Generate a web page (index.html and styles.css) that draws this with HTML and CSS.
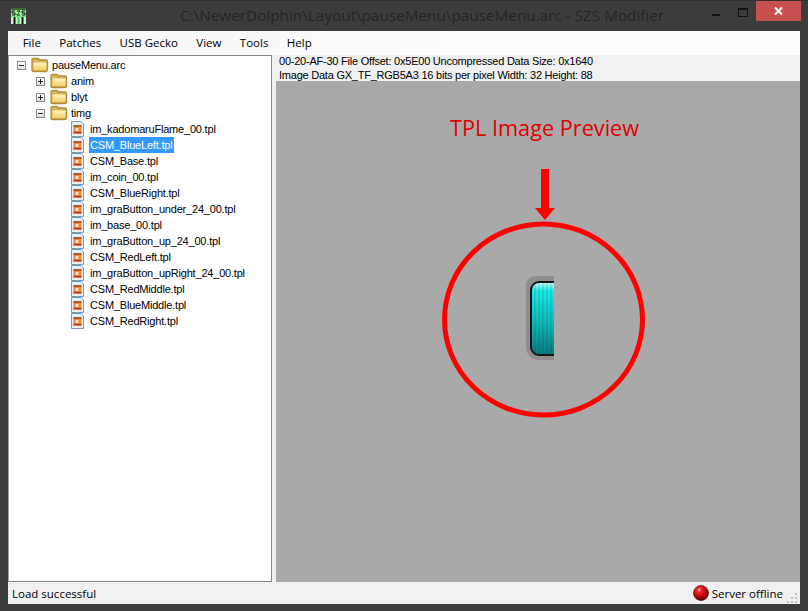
FILE: index.html
```html
<!DOCTYPE html>
<html lang="en">
<head>
<meta charset="utf-8">
<title>SZS Modifier</title>
<link rel="stylesheet" href="styles.css">
</head>
<body>
<div class="window">
  <header class="titlebar">
    <svg class="app-icon" width="15" height="16" viewBox="0 0 15 16">
      <rect width="15" height="16" fill="#6fe86f"/>
      <rect x="0" y="0" width="15" height="2" fill="#3a6a3a"/>
      <rect x="0" y="2" width="15" height="6" fill="#8ff08f"/>
      <path d="M1 3h3M1 5h3M1 7h3M1 3v2M4 5v2M6 3h3M8.500 3v1M7 5h1M6 7h3M6 6v1M11 3h3M11 5h3M11 7h3M11 3v2M14 5v2" stroke="#101810" stroke-width="1" fill="none"/>
      <rect x="0" y="9" width="15" height="7" fill="#c8f8c8"/>
      <path d="M3.500 9v7M11.500 9v7" stroke="#111" stroke-width="2" fill="none"/>
      <path d="M7.500 9v7" stroke="#4ac04a" stroke-width="2" fill="none"/>
    </svg>
    <div class="title">C:\NewerDolphin\Layout\pauseMenu\pauseMenu.arc - SZS Modifier</div>
    <div class="controls">
      <span class="min"></span>
      <span class="max"></span>
      <span class="close">
        <svg width="9" height="8" viewBox="0 0 9 8"><path d="M1 0.500L8 7.500M8 0.500L1 7.500" stroke="#fff" stroke-width="2" fill="none"/></svg>
      </span>
    </div>
  </header>
  <div class="client">
    <nav class="menubar">
      <span>File</span><span>Patches</span><span>USB Gecko</span><span>View</span><span>Tools</span><span>Help</span>
    </nav>
    <main class="split">
      <aside class="tree">
        <div class="row lvl0"><i class="exp minus"></i><svg class="folder"><use href="#folder"/></svg><span class="label">pauseMenu.arc</span></div>
        <div class="row lvl1"><i class="exp plus"></i><svg class="folder"><use href="#folder"/></svg><span class="label">anim</span></div>
        <div class="row lvl1"><i class="exp plus"></i><svg class="folder"><use href="#folder"/></svg><span class="label">blyt</span></div>
        <div class="row lvl1"><i class="exp minus"></i><svg class="folder"><use href="#folder"/></svg><span class="label">timg</span></div>
        <div class="row lvl2"><svg class="file"><use href="#file"/></svg><span class="label">im_kadomaruFlame_00.tpl</span></div>
        <div class="row lvl2"><svg class="file"><use href="#file"/></svg><span class="label selected">CSM_BlueLeft.tpl</span></div>
        <div class="row lvl2"><svg class="file"><use href="#file"/></svg><span class="label">CSM_Base.tpl</span></div>
        <div class="row lvl2"><svg class="file"><use href="#file"/></svg><span class="label">im_coin_00.tpl</span></div>
        <div class="row lvl2"><svg class="file"><use href="#file"/></svg><span class="label">CSM_BlueRight.tpl</span></div>
        <div class="row lvl2"><svg class="file"><use href="#file"/></svg><span class="label">im_graButton_under_24_00.tpl</span></div>
        <div class="row lvl2"><svg class="file"><use href="#file"/></svg><span class="label">im_base_00.tpl</span></div>
        <div class="row lvl2"><svg class="file"><use href="#file"/></svg><span class="label">im_graButton_up_24_00.tpl</span></div>
        <div class="row lvl2"><svg class="file"><use href="#file"/></svg><span class="label">CSM_RedLeft.tpl</span></div>
        <div class="row lvl2"><svg class="file"><use href="#file"/></svg><span class="label">im_graButton_upRight_24_00.tpl</span></div>
        <div class="row lvl2"><svg class="file"><use href="#file"/></svg><span class="label">CSM_RedMiddle.tpl</span></div>
        <div class="row lvl2"><svg class="file"><use href="#file"/></svg><span class="label">CSM_BlueMiddle.tpl</span></div>
        <div class="row lvl2"><svg class="file"><use href="#file"/></svg><span class="label">CSM_RedRight.tpl</span></div>
      </aside>
      <section class="detail">
        <div class="info">
          <div>00-20-AF-30 File Offset: 0x5E00 Uncompressed Data Size: 0x1640</div>
          <div>Image Data GX_TF_RGB5A3 16 bits per pixel Width: 32 Height: 88</div>
        </div>
        <div class="preview">
          <div class="callout">TPL Image Preview</div>
          <svg class="annot" width="524" height="501" viewBox="0 0 524 501">
            <defs>
              <linearGradient id="cyan" x1="0" y1="0" x2="0" y2="1">
                <stop offset="0" stop-color="#d0ffff"/>
                <stop offset="0.12" stop-color="#19e8e8"/>
                <stop offset="0.6" stop-color="#0eb4b6"/>
                <stop offset="1" stop-color="#0a7a80"/>
              </linearGradient>
              <pattern id="stripes" width="4" height="4" patternUnits="userSpaceOnUse">
                <rect x="2" width="2" height="4" fill="#000" opacity="0.09"/>
              </pattern>
            </defs>
            <path d="M278 195H259a9 9 0 0 0 -9 9V266a13 13 0 0 0 13 13H278z" fill="#8e8e8e"/>
            <path d="M278 201H263a8 8 0 0 0 -8 8V266a8 8 0 0 0 8 8H278z" fill="url(#cyan)"/>
            <path d="M278 201H263a8 8 0 0 0 -8 8V266a8 8 0 0 0 8 8H278z" fill="url(#stripes)"/>
            <path d="M278 201H263a8 8 0 0 0 -8 8V266a8 8 0 0 0 8 8H278" fill="none" stroke="#161616" stroke-width="2"/>
            <rect x="265" y="88" width="8" height="40" fill="#f00"/>
            <path d="M259 127H279L269 139z" fill="#f00"/>
            <ellipse cx="267.500" cy="238.500" rx="99" ry="95.500" fill="none" stroke="#f00" stroke-width="5"/>
          </svg>
        </div>
      </section>
    </main>
    <footer class="statusbar">
      <span class="status-text">Load successful</span>
      <span class="server">
        <svg width="16" height="16" viewBox="0 0 16 16">
          <defs><radialGradient id="led" cx="0.38" cy="0.3" r="0.75"><stop offset="0" stop-color="#ffd0d0"/><stop offset="0.16" stop-color="#f03030"/><stop offset="0.55" stop-color="#c00808"/><stop offset="1" stop-color="#5a0000"/></radialGradient></defs>
          <circle cx="8" cy="8" r="7.500" fill="url(#led)" stroke="#4a0a0a" stroke-width="0.700"/>
        </svg>
        Server offline
      </span>
      <svg class="grip" width="11" height="11" viewBox="0 0 11 11">
        <path d="M8 1h2v2H8zM4 5h2v2H4zM8 5h2v2H8zM0 9h2v2H0zM4 9h2v2H4zM8 9h2v2H8z" fill="#c4c4c4"/>
      </svg>
    </footer>
  </div>
</div>
<svg class="sprites" width="0" height="0">
  <defs>
    <linearGradient id="fold" x1="0" y1="0" x2="0" y2="1">
      <stop offset="0" stop-color="#fff6c8"/>
      <stop offset="1" stop-color="#f4cf66"/>
    </linearGradient>
    <symbol id="folder" viewBox="0 0 18 16">
      <path d="M1 13V3Q1 1.500 2.500 1.500H7l1.500 1.500H15q1.500 0 1.500 1.500V13q0 1.500-1.500 1.500H2.500Q1 14.500 1 13z" fill="#dcb45a" stroke="#b28a3c" stroke-width="1.300"/>
      <rect x="2.500" y="5.500" width="13" height="7.500" rx="1" fill="url(#fold)"/>
    </symbol>
    <symbol id="file" viewBox="0 0 14 16">
      <path d="M0.500 0.500H10L12.500 3V15.500H0.500z" fill="#e8eef6" stroke="#7d97bb"/>
      <rect x="2.500" y="4" width="8" height="9" fill="#e8873e"/>
      <rect x="2.500" y="4" width="8" height="2" fill="#a8612e"/>
      <rect x="4.500" y="7" width="3" height="3" fill="#ffe6b0"/>
      <path d="M2.500 11.500h8" stroke="#b8401e" stroke-width="1.500"/>
    </symbol>
  </defs>
</svg>
</body>
</html>
```
FILE: styles.css
```css
* { box-sizing: border-box; }
html, body { margin: 0; height: 100%; overflow: hidden; }
body { font-family: "Open Sans", "Liberation Sans", sans-serif; font-size: 12px; color: #000; background: #3c3c3c; }
.sprites { display: block; height: 0; }
.window { width: 808px; height: 611px; display: flex; flex-direction: column; padding: 0 8px 7px; background: #3c3c3c; border-top: 1px solid #303030; }
.titlebar { flex: 0 0 30px; display: flex; align-items: flex-start; position: relative; }
.app-icon { margin: 7px 0 0 3px; flex: none; }
.title { position: absolute; left: 172px; top: 3px; font-size: 15.300px; line-height: 22px; color: #252525; white-space: nowrap; }
.controls { margin-left: auto; display: flex; align-items: flex-start; margin-right: -1px; }
.min { width: 8px; height: 2px; background: #111; margin: 13px 18px 0 0; }
.max { width: 10px; height: 9px; border: 1px solid #111; border-top-width: 2px; margin: 7px 8px 0 0; }
.close { width: 45px; height: 20px; background: #c75050; display: flex; align-items: center; justify-content: center; }
.client { flex: 1; display: flex; flex-direction: column; background: #f0f0f0; min-height: 0; }
.menubar { flex: 0 0 24px; background: linear-gradient(90deg, #f5f5f5, #fdfdfd 60%); display: flex; padding-left: 5.500px; font-size: 11.500px; line-height: 24px; white-space: nowrap; }
.menubar span { padding: 0 9.200px; }
.split { flex: 1; display: flex; min-height: 0; }
.tree { flex: 0 0 264px; background: #fff; border: 1px solid #828790; border-left-color: #a0a0a0; padding-top: 1px; overflow: hidden; font-family: "Liberation Sans", sans-serif; font-size: 11px; letter-spacing: -0.2px; }
.row { height: 16px; display: flex; align-items: center; white-space: nowrap; }
.lvl0 { padding-left: 8px; }
.lvl1 { padding-left: 27px; }
.lvl2 { padding-left: 62px; }
.exp { flex: none; width: 9px; height: 9px; border: 1px solid #8a8a8a; background: linear-gradient(#fff, #e0e0e0); position: relative; margin-right: 5px; }
.exp::before { content: ""; position: absolute; left: 1px; top: 3px; width: 5px; height: 1px; background: #222; }
.plus::after { content: ""; position: absolute; left: 3px; top: 1px; width: 1px; height: 5px; background: #222; }
.folder { flex: none; width: 18px; height: 16px; margin-right: 2px; }
.file { flex: none; width: 14px; height: 16px; margin-right: 4px; }
.label { padding: 0 2px 0 1px; line-height: 16px; }
.selected { background: #3399ff; color: #fff; }
.detail { flex: 1; display: flex; flex-direction: column; margin-left: 4px; min-width: 0; }
.info { flex: 0 0 26px; min-height: 0; display: flex; flex-direction: column; gap: 1px; font-family: "Liberation Sans", sans-serif; font-size: 11px; letter-spacing: -0.23px; line-height: 13px; padding-left: 3px; white-space: nowrap; }
.preview { flex: 1; background: #a9a9a9; position: relative; }
.callout { position: absolute; left: 174px; top: 32px; color: #e00000; font-size: 21.700px; line-height: 30px; white-space: nowrap; }
.annot { position: absolute; left: 0; top: 0; display: block; }
.statusbar { flex: 0 0 22px; display: flex; align-items: center; padding-left: 4px; font-size: 11.500px; position: relative; }
.status-text { flex: 1; }
.server { display: flex; align-items: center; gap: 3px; margin-right: 17px; }
.grip { position: absolute; right: 2px; bottom: 1px; }
```
